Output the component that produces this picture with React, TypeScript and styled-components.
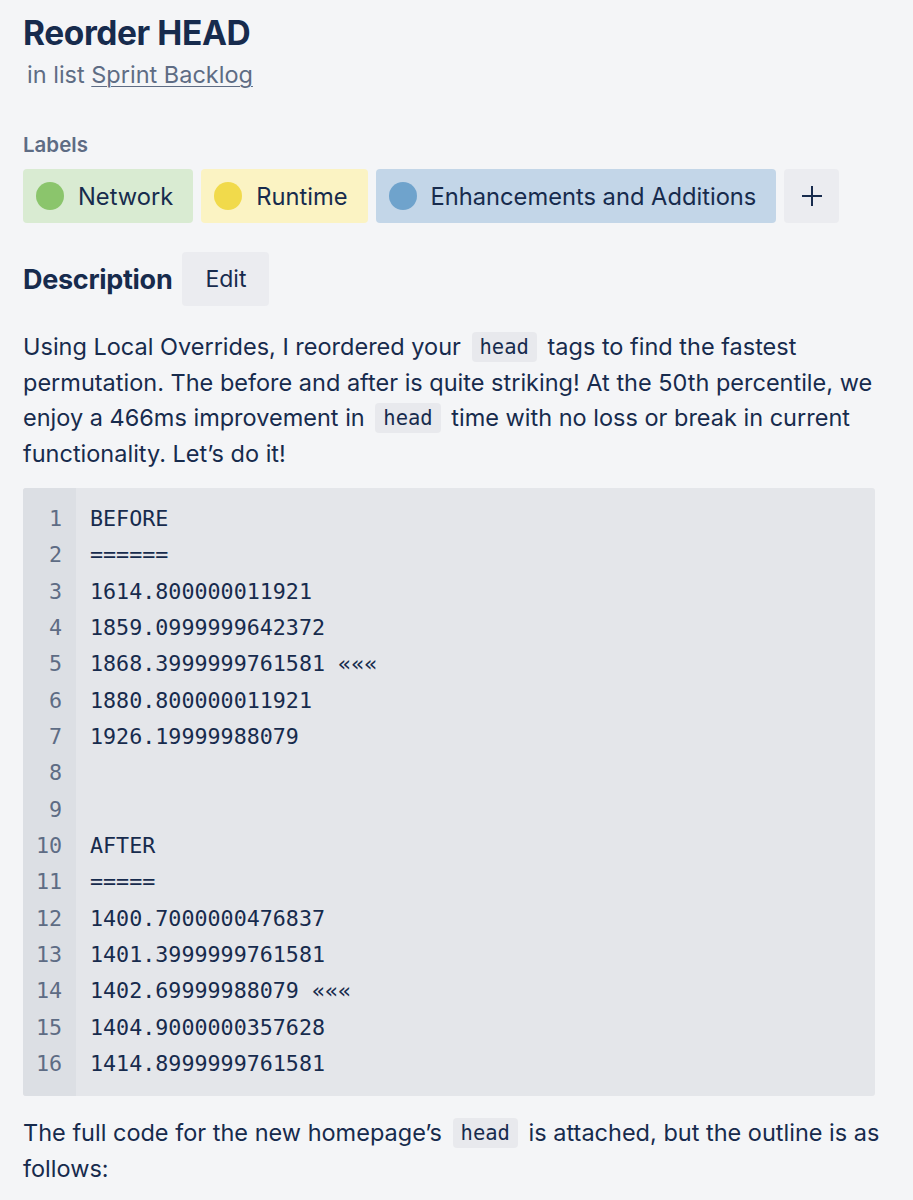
import React from "react";
import styled, { createGlobalStyle } from "styled-components";

const Global = createGlobalStyle`
  html, body { margin: 0; padding: 0; background: #f4f5f7; }
  body { font-family: Inter, "Noto Sans", sans-serif; color: #172b4d; }
`;

const Page = styled.div`
  padding: 13px 20px 40px 23px;
  display: flex;
  flex-direction: column;
`;

const Title = styled.h1`
  margin: 0;
  font-size: 33.5px;
  font-weight: 700;
  line-height: 40px;
  letter-spacing: -0.4px;
  color: #172b4d;
`;

const Subtitle = styled.div`
  margin: 6px 0 0 4px;
  font-size: 23.5px;
  line-height: 32px;
  color: #5e6c84;
  a { color: #5e6c84; text-decoration: underline; text-underline-offset: 3px; text-decoration-thickness: 1px; }
`;

const SectionLabel = styled.div`
  margin-top: 42px;
  font-size: 20.5px;
  font-weight: 600;
  color: #5e6c84;
  line-height: 24px;
`;

const LabelRow = styled.div`
  margin-top: 12px;
  display: flex;
  gap: 8px;
`;

const Label = styled.div<{ $bg: string }>`
  display: flex;
  align-items: center;
  gap: 14px;
  height: 54px;
  padding: 0 20px 0 13px;
  border-radius: 4px;
  background: ${(p) => p.$bg};
  font-size: 23.7px;
  color: #172b4d;
`;

const Dot = styled.span<{ $c: string }>`
  width: 28px;
  height: 28px;
  border-radius: 50%;
  background: ${(p) => p.$c};
`;

const SquareButton = styled.button`
  width: 55px;
  height: 54px;
  border: 0;
  border-radius: 4px;
  background: #ebecf0;
  display: flex;
  align-items: center;
  justify-content: center;
  padding: 0;
  color: #172b4d;
`;

const DescHeader = styled.div`
  margin-top: 29px;
  display: flex;
  align-items: center;
  gap: 10px;
`;

const DescTitle = styled.h2`
  margin: 0;
  font-size: 27px;
  font-weight: 700;
  letter-spacing: -0.3px;
  color: #172b4d;
`;

const EditButton = styled.button`
  height: 54px;
  padding: 0 23px;
  border: 0;
  border-radius: 4px;
  background: #ebecf0;
  font-family: Inter, sans-serif;
  font-size: 23px;
  color: #172b4d;
`;

const Paragraph = styled.p<{ $top: number }>`
  margin: ${(p) => p.$top}px 0 0;
  font-size: 23.5px;
  line-height: 35.5px;
  color: #172b4d;
`;

const InlineCode = styled.code`
  display: inline-block;
  font-family: "DejaVu Sans Mono", monospace;
  font-size: 20.5px;
  line-height: 30px;
  background: #e8e9ed;
  border-radius: 4px;
  padding: 0 8px;
  margin: 0 4px;
  vertical-align: 1px;
`;

const CodeBlock = styled.div`
  margin: 17px 18px 0 0;
  display: flex;
  background: #e4e6ea;
  border-radius: 3px;
  overflow: hidden;
  font-family: "DejaVu Sans Mono", monospace;
  font-size: 21.7px;
  line-height: 36.33px;
`;

const Gutter = styled.div`
  width: 53px;
  box-sizing: border-box;
  padding: 13px 14px 14px 0;
  background: #dcdfe4;
  text-align: right;
  color: #5e6c84;
`;

const CodeBody = styled.div`
  padding: 13px 14px 14px 14px;
  color: #172b4d;
  white-space: pre;
`;

const Line = styled.div`
  height: 36.33px;
`;

const codeLines = [
  "BEFORE",
  "======",
  "1614.800000011921",
  "1859.0999999642372",
  "1868.3999999761581 «««",
  "1880.800000011921",
  "1926.19999988079",
  "",
  "",
  "AFTER",
  "=====",
  "1400.7000000476837",
  "1401.3999999761581",
  "1402.69999988079 «««",
  "1404.9000000357628",
  "1414.8999999761581",
];

export default function App() {
  return (
    <>
      <Global />
      <Page>
        <Title>Reorder HEAD</Title>
        <Subtitle>
          in list <a href="#">Sprint Backlog</a>
        </Subtitle>
        <SectionLabel>Labels</SectionLabel>
        <LabelRow>
          <Label $bg="#d9ebd2">
            <Dot $c="#8bc56c" />
            Network
          </Label>
          <Label $bg="#fbf3c3">
            <Dot $c="#f1da4b" />
            Runtime
          </Label>
          <Label $bg="#c3d6e8">
            <Dot $c="#6fa3cc" />
            Enhancements and Additions
          </Label>
          <SquareButton aria-label="Add label">
            <svg width="22" height="22" viewBox="0 0 22 22">
              <path d="M11 1v20M1 11h20" stroke="#172b4d" strokeWidth="2" />
            </svg>
          </SquareButton>
        </LabelRow>
        <DescHeader>
          <DescTitle>Description</DescTitle>
          <EditButton>Edit</EditButton>
        </DescHeader>
        <Paragraph $top={23}>
          Using Local Overrides, I reordered your <InlineCode>head</InlineCode> tags to find the
          fastest permutation. The before and after is quite striking! At the 50th percentile, we
          enjoy a 466ms improvement in <InlineCode>head</InlineCode> time with no loss or break in
          current functionality. Let’s do it!
        </Paragraph>
        <CodeBlock>
          <Gutter>
            {codeLines.map((_, i) => (
              <Line key={i}>{i + 1}</Line>
            ))}
          </Gutter>
          <CodeBody>
            {codeLines.map((l, i) => (
              <Line key={i}>{l}</Line>
            ))}
          </CodeBody>
        </CodeBlock>
        <Paragraph $top={19}>
          The full code for the new homepage’s <InlineCode>head</InlineCode> is attached, but the
          outline is as follows:
        </Paragraph>
      </Page>
    </>
  );
}
